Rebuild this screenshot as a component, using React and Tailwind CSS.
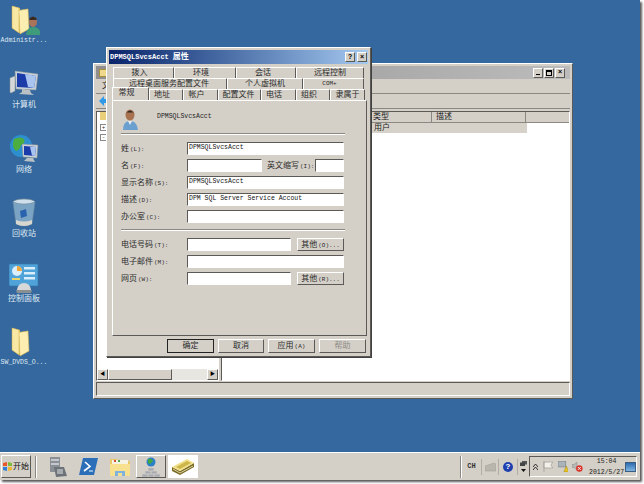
import React from 'react';

const raised = 'border border-t-white border-l-white border-r-[#5c5a56] border-b-[#5c5a56]';
const sunken = 'border border-t-[#5c5a56] border-l-[#5c5a56] border-r-white border-b-white';

// chinese label followed by the small latin mnemonic
function Lbl({ zh, en, className = '' }) {
  return (
    <span className={`text-[8px] leading-none text-[#2b2b2b] whitespace-nowrap ${className}`}>
      {zh}
      {en && <span className="text-[6px] ml-[1px]">{en}</span>}
    </span>
  );
}

function Field({ w, value }) {
  return (
    <div className={`${sunken} bg-white h-[13px] flex items-center px-[1px] text-[6.5px] leading-none text-[#111] ${w}`}>
      {value}
    </div>
  );
}

function Row({ label, en, children }) {
  return (
    <div className="flex items-center h-[13px]">
      <div className="w-[66px] flex"><Lbl zh={label} en={en} /></div>
      {children}
    </div>
  );
}

function Btn({ children, className = '' }) {
  return (
    <div className={`${raised} bg-[#d4d0c8] flex items-center justify-center ${className}`}>{children}</div>
  );
}

function Tab({ w, children, active, pad = '' }) {
  return (
    <div className={`${w} ${pad} shrink-0 flex items-center justify-center border-t border-l border-r border-t-white border-l-white border-r-[#5c5a56] rounded-t-[1px] text-[8px] leading-none text-[#2b2b2b] bg-[#d4d0c8] ${active ? 'h-[13px] -mt-[2px] relative z-10 -mb-[1px] pb-[3px]' : 'h-[11px]'}`}>
      {children}
    </div>
  );
}

function FolderIcon({ user }) {
  return (
    <svg width="32" height="32" viewBox="0 0 32 32">
      <path d="M4 3 L12 5 L12 30 L4 25 Z" fill="#e9c868" />
      <path d="M7 8 L20 6 L21 26 L12 31 L11 11 Z" fill="#fbeeb0" stroke="#d9b858" strokeWidth=".6" />
      <path d="M4 3 L11 5 L11 30 L4 25 Z" fill="#f9e7a4" stroke="#c9a84c" strokeWidth=".5" />
      {user && (
        <g>
          <ellipse cx="25" cy="19" rx="4" ry="5" fill="#a9745a" />
          <path d="M21 16 Q25 11 29 16 L28 17 L22 17Z" fill="#3a2a22" />
          <path d="M18 32 Q19 24 25 24 Q32 24 33 32Z" fill="#3f9b7a" />
        </g>
      )}
    </svg>
  );
}

function ComputerIcon() {
  return (
    <svg width="30" height="30" viewBox="0 0 30 30">
      <path d="M1 9 L6 7 L6 22 L2 24 Q1 24 1 23Z" fill="#d5d8d8" stroke="#8a9296" strokeWidth=".5" />
      <path d="M6 2 L29 5 L27 21 L7 20 Z" fill="#c9d2d8" stroke="#8a9296" strokeWidth=".5" />
      <path d="M8 4 L27 7 L25 19 L8 18 Z" fill="#1a3ba8" />
      <path d="M16 5 L27 7 L25 19 L19 18 Z" fill="#a9c4ee" />
      <path d="M13 20 L21 21 L22 24 L25 26 L10 25 L13 23Z" fill="#b9c1c5" />
    </svg>
  );
}

function NetworkIcon() {
  return (
    <svg width="30" height="30" viewBox="0 0 30 30">
      <circle cx="12" cy="12" r="11" fill="#2d8fd0" />
      <path d="M5 5 Q11 2 15 5 Q17 9 12 11 Q11 16 7 17 Q2 13 5 5Z" fill="#4cae3f" />
      <path d="M16 17 Q20 15 22 17 L18 23 Q15 21 16 17Z" fill="#4cae3f" />
      <path d="M13 10 L29 11 L28 24 L14 23Z" fill="#c9d2d8" stroke="#7f888d" strokeWidth=".5" />
      <path d="M15 12 L27 13 L26 22 L15 21Z" fill="#1a3ba8" />
      <path d="M21 13 L27 13 L26 22 L23 21.5Z" fill="#a9c4ee" />
      <path d="M18 24 L24 24 L26 28 L15 27Z" fill="#b9c1c5" />
    </svg>
  );
}

function BinIcon() {
  return (
    <svg width="24" height="30" viewBox="0 0 24 30">
      <ellipse cx="12" cy="4" rx="11" ry="3" fill="#cfe0ea" stroke="#6f8796" strokeWidth=".7" />
      <path d="M1 4 L4 26 Q12 30 20 26 L23 4 Q12 8 1 4Z" fill="#7ba3c4" stroke="#6f8796" strokeWidth=".5" />
      <path d="M8 13 L14 11 L15 18 L9 20Z" fill="#2a62ad" />
      <path d="M4 22 Q12 25 20 22 L20 26 Q12 30 4 26Z" fill="#d7d7d0" />
    </svg>
  );
}

function PanelIcon() {
  return (
    <svg width="30" height="30" viewBox="0 0 30 30">
      <rect x="0" y="1" width="29" height="22" rx="1" fill="#4fa3d8" stroke="#2f76ae" strokeWidth=".6" />
      <circle cx="8" cy="8" r="5" fill="#d9eefa" />
      <path d="M8 3 A5 5 0 0 1 13 8 L8 8Z" fill="#f2a634" />
      <rect x="15" y="4" width="11" height="2.5" fill="#d9eefa" />
      <rect x="15" y="9" width="11" height="2.5" fill="#d9eefa" />
      <rect x="15" y="14" width="11" height="2.5" fill="#d9eefa" />
      <rect x="3" y="15" width="8" height="2" fill="#e8d56c" />
      <path d="M8 27 Q9 20 15 20 Q21 20 22 27Z" fill="#d8d8d8" />
      <path d="M7 27 L23 27 L22 30 L8 30Z" fill="#8a8f92" />
    </svg>
  );
}

function DeskIcon({ icon, label, size }) {
  return (
    <div className="h-[64.4px] w-[48px] flex flex-col items-center">
      <div className="h-[31px] flex items-end justify-center">{icon}</div>
      <div className={`mt-[1px] leading-[9px] text-[#dfe8f2] whitespace-nowrap ${size}`}>{label}</div>
    </div>
  );
}

function UserIcon() {
  return (
    <svg width="18" height="22" viewBox="0 0 18 22">
      <ellipse cx="8" cy="6" rx="4.5" ry="5.5" fill="#a8714f" />
      <path d="M3.5 5 Q8 -2 12.5 5 L11 3.5 L5 3.5Z" fill="#2e2a28" />
      <path d="M1 21 Q1 12 8 12 Q15 12 16 21Z" fill="#6b9fd0" />
      <path d="M6 12 L8 16 L10 12Z" fill="#e8eef4" />
    </svg>
  );
}

function WinBtn({ children }) {
  return (
    <div className={`${raised} bg-[#d4d0c8] w-[10px] h-[10px] flex items-center justify-center text-[7px] font-bold leading-none text-black`}>{children}</div>
  );
}

function BackWindow() {
  return (
    <div className={`${raised} absolute left-[93px] top-[63px] w-[480px] h-[336px] bg-[#d4d0c8] p-[2px] flex flex-col`}>
      <div className="h-[13px] shrink-0 flex items-center gap-[1px] pl-[3px] pr-[5px] bg-gradient-to-r from-[#8f8f8f] to-[#bcbcbc]">
        <div className="w-[8px] h-[8px] bg-[#efd98a] border border-[#a88f3e]" />
        <div className="flex-1" />
        <WinBtn><span className="w-[4px] h-[1px] bg-black mt-[4px]" /></WinBtn>
        <WinBtn><span className="w-[6px] h-[6px] border border-black border-t-2" /></WinBtn>
        <WinBtn>×</WinBtn>
      </div>
      <div className="h-[15px] shrink-0 border-b border-[#8a8883] flex items-center pl-[6px] text-[8px] leading-none text-[#222]">文</div>
      <div className="h-[15px] shrink-0 border-b border-[#8a8883] flex items-center pl-[3px]">
        <svg width="11" height="10" viewBox="0 0 11 10"><path d="M0 5 L5 0 L5 3 L11 3 L11 7 L5 7 L5 10Z" fill="#2f9be8" /></svg>
      </div>
      <div className="flex-1 flex mt-[2px] min-h-0">
        <div className={`${sunken} w-[123px] bg-white flex flex-col shrink-0`}>
          <div className="flex-1 pl-[3px] flex flex-col">
            <div className="w-[7px] h-[8px] bg-[#e9cf7a]" />
            <div className="w-[7px] h-[7px] mt-[4px] border border-[#888] text-[6px] leading-[5px] text-center text-[#333]">+</div>
            <div className="w-[7px] h-[7px] mt-[3px] border border-[#888] text-[6px] leading-[5px] text-center text-[#333]">-</div>
          </div>
          <div className="h-[11px] flex bg-[#e8e6e1]">
            <div className={`${raised} w-[11px] bg-[#d4d0c8] flex items-center justify-center text-[5px] leading-none`}>◀</div>
            <div className={`${raised} w-[64px] bg-[#d4d0c8]`} />
            <div className="flex-1" />
            <div className={`${raised} w-[11px] bg-[#d4d0c8] flex items-center justify-center text-[5px] leading-none`}>▶</div>
          </div>
        </div>
        <div className="w-[2px] bg-[#d4d0c8] shrink-0" />
        <div className={`${sunken} flex-1 bg-white flex flex-col`}>
          <div className="h-[11px] bg-[#d4d0c8] border-b border-[#8a8883] flex items-center text-[8px] leading-none text-[#222] shrink-0">
            <div className="w-[150px]" />
            <div className="w-[60px] border-r border-[#8a8883] h-full flex items-center pl-[1px]">类型</div>
            <div className="w-[94px] border-r border-[#8a8883] h-full flex items-center pl-[4px]">描述</div>
          </div>
          <div className="flex h-[10px] text-[8px] leading-none text-[#222]">
            <div className="w-[150px]" />
            <div className="w-[155px] bg-[#d6d2ca] flex items-center pl-[2px]">用户</div>
          </div>
        </div>
      </div>
      <div className={`h-[14px] shrink-0 mt-[1px] ${sunken}`} />
    </div>
  );
}

function Dialog() {
  return (
    <div className={`${raised} absolute left-[106px] top-[47px] w-[265px] h-[310px] bg-[#d4d0c8] shadow-[1px_1px_0_#404040] z-10 flex flex-col p-[2px]`}>
      <div className="h-[14px] shrink-0 flex items-center justify-between pl-[1px] pr-[1px] bg-gradient-to-r from-[#0a246a] to-[#a6caf0]">
        <span className="text-[7px] font-bold leading-none text-white whitespace-nowrap">DPMSQLSvcsAcct<span className="text-[8px] ml-[4px]">属性</span></span>
        <div className="flex gap-[2px]">
          <WinBtn>?</WinBtn>
          <WinBtn>×</WinBtn>
        </div>
      </div>
      <div className="flex flex-col pl-[3px] pt-[3px]">
        <div className="flex pl-[1px]">
          <Tab w="w-[61px]" pad="pr-[8px]">拨入</Tab>
          <Tab w="w-[62px]" pad="pr-[8px]">环境</Tab>
          <Tab w="w-[60px]" pad="pr-[6px]">会话</Tab>
          <Tab w="w-[68px]">远程控制</Tab>
        </div>
        <div className="flex pl-[1px]">
          <Tab w="w-[114px]" pad="pr-[2px]">远程桌面服务配置文件</Tab>
          <Tab w="w-[76px]">个人虚拟机</Tab>
          <Tab w="w-[61px]" pad="pr-[8px]"><span className="text-[6px]">COM+</span></Tab>
        </div>
        <div className="flex">
          <Tab w="w-[37px]" pad="pr-[8px]" active>常规</Tab>
          <Tab w="w-[34px]" pad="pr-[8px]">地址</Tab>
          <Tab w="w-[35px]" pad="pr-[8px]">帐户</Tab>
          <Tab w="w-[43px]" pad="pr-[2px]">配置文件</Tab>
          <Tab w="w-[35px]" pad="pr-[9px]">电话</Tab>
          <Tab w="w-[34px]" pad="pr-[8px]">组织</Tab>
          <Tab w="w-[35px]">隶属于</Tab>
        </div>
      </div>
      <div className={`${raised} relative ml-[3px] w-[255px] h-[236px] px-[8px] pt-[8px] flex flex-col`}>
        <div className="flex h-[22px]">
          <div className="w-[36px] pl-[1px]"><UserIcon /></div>
          <span className="text-[6.5px] leading-none text-[#222] mt-[5px]">DPMSQLSvcsAcct</span>
        </div>
        <div className="h-[2px] mt-[2px] w-[224px] border-t border-[#8a8883] border-b-white border-b" />
        <div className="flex flex-col gap-[4px] mt-[7px]">
          <Row label="姓" en="(L):"><Field w="w-[157px]" value="DPMSQLSvcsAcct" /></Row>
          <Row label="名" en="(F):">
            <Field w="w-[75px]" />
            <Lbl zh="英文缩写" en="(I):" className="ml-[5px] w-[48px]" />
            <Field w="w-[29px]" />
          </Row>
          <Row label="显示名称" en="(S):"><Field w="w-[157px]" value="DPMSQLSvcsAcct" /></Row>
          <Row label="描述" en="(D):"><Field w="w-[157px]" value="DPM SQL Server Service Accout" /></Row>
          <Row label="办公室" en="(C):"><Field w="w-[157px]" /></Row>
        </div>
        <div className="h-[2px] mt-[6px] w-[224px] border-t border-[#8a8883] border-b-white border-b" />
        <div className="flex flex-col gap-[4px] mt-[7px]">
          <Row label="电话号码" en="(T):">
            <Field w="w-[104px]" />
            <Btn className="ml-[6px] w-[47px] h-[13px]"><Lbl zh="其他" en="(O)..." /></Btn>
          </Row>
          <Row label="电子邮件" en="(M):"><Field w="w-[157px]" /></Row>
          <Row label="网页" en="(W):">
            <Field w="w-[104px]" />
            <Btn className="ml-[6px] w-[47px] h-[13px]"><Lbl zh="其他" en="(R)..." /></Btn>
          </Row>
        </div>
      </div>
      <div className="flex gap-[4px] justify-end pr-[2px] mt-[3px]">
        <Btn className="w-[47px] h-[14px] outline outline-1 outline-[#222] -outline-offset-1"><Lbl zh="确定" /></Btn>
        <Btn className="w-[46px] h-[14px]"><Lbl zh="取消" /></Btn>
        <Btn className="w-[47px] h-[14px]"><Lbl zh="应用" en="(A)" /></Btn>
        <Btn className="w-[47px] h-[14px]"><span className="text-[8px] leading-none text-[#8f8c86]">帮助</span></Btn>
      </div>
    </div>
  );
}

function Taskbar() {
  return (
    <div className="h-[28px] shrink-0 bg-[#d4d0c8] border-t border-white flex items-center relative z-20">
      <div className={`${raised} ml-[1px] w-[30px] h-[23px] flex items-center justify-center gap-[1px]`}>
        <svg width="9" height="9" viewBox="0 0 9 9">
          <path d="M0 1 L4 0 L4 4 L0 4Z" fill="#e8562a" />
          <path d="M5 0 L9 1 L9 4 L5 4Z" fill="#7fb83a" />
          <path d="M0 5 L4 5 L4 9 L0 8Z" fill="#2f7fd8" />
          <path d="M5 5 L9 5 L9 8 L5 9Z" fill="#f2b632" />
        </svg>
        <span className="text-[8px] leading-none text-[#111]">开始</span>
      </div>
      <div className="w-[2px] h-[22px] ml-[4px] border-l border-[#8a8883] border-r border-r-white" />
      <div className="ml-[12px] w-[18px] flex justify-center">
        <svg width="18" height="20" viewBox="0 0 18 20">
          <rect x="1" y="0" width="10" height="15" fill="#8b9096" />
          <rect x="2" y="2" width="8" height="2" fill="#c4c8cc" />
          <rect x="2" y="6" width="8" height="2" fill="#c4c8cc" />
          <path d="M5 10 L15 10 L18 19 L7 20Z" fill="#6c7278" />
          <rect x="8" y="12" width="6" height="5" fill="#a6abb0" />
        </svg>
      </div>
      <div className="ml-[11px] w-[20px] flex justify-center">
        <svg width="19" height="17" viewBox="0 0 19 17">
          <path d="M4 0 L19 0 L15 17 L0 17Z" fill="#2a6fb8" />
          <path d="M6 4 L11 8.5 L5 13" fill="none" stroke="#fff" strokeWidth="1.6" />
          <path d="M10 13 L14 13" stroke="#cfe2f4" strokeWidth="1.2" />
        </svg>
      </div>
      <div className="ml-[12px] w-[20px] flex justify-center">
        <svg width="20" height="19" viewBox="0 0 20 19">
          <path d="M0 2 L7 2 L8 4 L20 4 L20 19 L0 19Z" fill="#e9c868" />
          <rect x="2" y="3" width="16" height="4" fill="#f7f3e2" />
          <rect x="4" y="3" width="2" height="2" fill="#d8493a" />
          <rect x="8" y="3" width="2" height="2" fill="#4fa84a" />
          <path d="M0 7 L20 7 L20 19 L0 19Z" fill="#f7e08e" />
          <path d="M5 19 L5 14 L15 14 L15 19 L12 19 L12 16 L8 16 L8 19Z" fill="#7fb2de" />
        </svg>
      </div>
      <div className={`${raised} ml-[6px] w-[30px] h-[23px] flex items-center justify-center`}>
        <svg width="18" height="20" viewBox="0 0 18 20">
          <circle cx="9" cy="5" r="4.5" fill="#2d7fc8" />
          <path d="M6 2 Q10 1 11 4 L8 7 L6 6Z" fill="#3fa83f" />
          <path d="M6 11h6v3H6zM3 14h6v3H3zM9 14h6v3H9zM0 17h6v3H0zM6 17h6v3H6zM12 17h6v3h-6z" fill="#a8aab2" stroke="#d4d0c8" strokeWidth=".5" />
        </svg>
      </div>
      <div className="ml-[2px] w-[30px] h-[23px] bg-white flex items-center justify-center">
        <svg width="22" height="16" viewBox="0 0 22 16">
          <path d="M0 8 L0 12 L8 16 L22 8 L22 4 L8 12Z" fill="#7a6a24" />
          <path d="M0 8 L15 0 L22 4 L8 12Z" fill="#f2e08a" />
          <path d="M4 8 L15 2 L19 4 L8 10Z" fill="#cdb64c" />
          <path d="M1 10 L8 14 L21 7" fill="none" stroke="#f5ecc0" strokeWidth=".8" />
        </svg>
      </div>
      <div className="flex-1" />
      <div className="w-[2px] h-[22px] border-l border-[#8a8883] border-r border-r-white" />
      <div className="w-[19px] text-center text-[7px] font-bold leading-none text-[#333]">CH</div>
      <div className="w-[1px] h-[16px] bg-[#b0aca4]" />
      <div className="w-[16px] flex justify-center">
        <svg width="11" height="10" viewBox="0 0 11 10"><path d="M0 4 L9 1 L11 2 L11 9 L0 9Z" fill="#b9b6ae" stroke="#9d9a92" strokeWidth=".5" /></svg>
      </div>
      <div className="w-[1px] h-[16px] bg-[#b0aca4]" />
      <div className="w-[18px] flex justify-center">
        <div className="w-[10px] h-[10px] rounded-full bg-[#1f3fae] flex items-center justify-center text-[8px] font-bold leading-none text-white">?</div>
      </div>
      <div className="w-[1px] h-[16px] bg-[#b0aca4]" />
      <div className="w-[10px] flex flex-col items-center text-[#333]">
        <svg width="7" height="5" viewBox="0 0 7 5"><rect x="2" y="0" width="5" height="3.5" fill="#555" /><rect x="0" y="1.5" width="5" height="3.5" fill="#444" /></svg>
        <svg className="mt-[3px]" width="5" height="3" viewBox="0 0 5 3"><path d="M0 0h5L2.5 3Z" fill="#111" /></svg>
      </div>
      <div className={`${sunken} ml-[1px] w-[108px] h-[21px] flex items-center mr-[3px]`}>
        <div className="w-[10px] ml-[1px] flex justify-center">
          <svg width="5" height="6" viewBox="0 0 5 6"><path d="M0 3 L2.5 0 L5 3M0 6 L2.5 3 L5 6" fill="none" stroke="#222" strokeWidth=".9" /></svg>
        </div>
        <svg className="ml-[2px]" width="11" height="11" viewBox="0 0 11 11"><path d="M1 0 L1 11M1 1 L10 1 L8 4 L10 7 L1 7Z" fill="#f3f1ea" stroke="#9c9a94" strokeWidth=".7" /></svg>
        <svg className="ml-[4px]" width="11" height="11" viewBox="0 0 11 11"><rect x="0" y="0" width="8" height="6" fill="#aab3b8" stroke="#6d7478" strokeWidth=".5" /><path d="M6 11 L8.5 5 L11 11Z" fill="#e8c520" stroke="#8a7410" strokeWidth=".4" /></svg>
        <svg className="ml-[4px]" width="11" height="11" viewBox="0 0 11 11"><path d="M0 3.5 L2 3.5 L5 1 L5 9 L2 6.5 L0 6.5Z" fill="#b8b8b4" stroke="#777" strokeWidth=".4" /><circle cx="7.5" cy="7.5" r="3.3" fill="#d8322a" /><path d="M6 6 L9 9M9 6 L6 9" stroke="#fff" strokeWidth=".9" /></svg>
        <div className="ml-[6px] mt-[2px] w-[36px] flex flex-col items-center gap-[4px] text-[6.5px] leading-none text-[#222]">
          <span>15:04</span>
          <span className="whitespace-nowrap">2012/5/27</span>
        </div>
        <div className="ml-[1px] w-[11px] h-[10px] bg-gradient-to-b from-[#2b6cb0] to-[#7fb6e2] border border-[#3c5c80]" />
      </div>
    </div>
  );
}

export default function App() {
  return (
    <div className='relative w-[644px] h-[484px] bg-white overflow-hidden font-["Liberation_Mono","Noto_Sans_CJK_SC",monospace]'>
      <div className="relative w-[640px] h-[480px] bg-[#35689e] shadow-[2px_2px_2px_rgba(0,0,0,0.65)] flex flex-col">
        <div className="flex-1 flex flex-col pt-[4px] relative">
          <DeskIcon icon={<FolderIcon user />} label="Administr..." size="text-[6.5px]" />
          <DeskIcon icon={<ComputerIcon />} label="计算机" size="text-[8px]" />
          <DeskIcon icon={<NetworkIcon />} label="网络" size="text-[8px]" />
          <DeskIcon icon={<BinIcon />} label="回收站" size="text-[8px]" />
          <DeskIcon icon={<PanelIcon />} label="控制面板" size="text-[8px]" />
          <DeskIcon icon={<FolderIcon />} label="SW_DVDS_O..." size="text-[6.5px]" />
          <BackWindow />
          <Dialog />
        </div>
        <Taskbar />
      </div>
    </div>
  );
}
